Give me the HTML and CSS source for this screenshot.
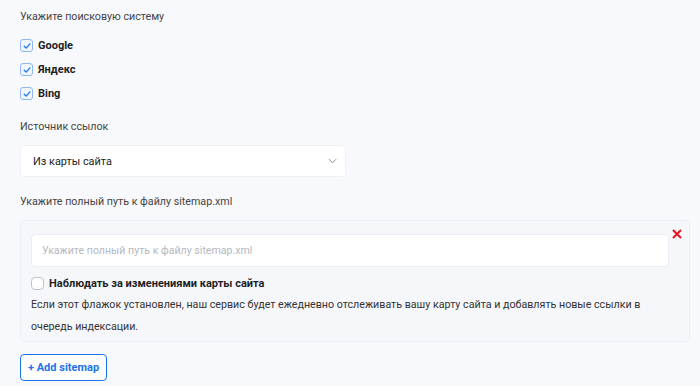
FILE: index.html
```html
<!DOCTYPE html>
<html lang="ru">
<head>
<meta charset="utf-8">
<link rel="stylesheet" href="styles.css">
</head>
<body>
<div class="page">
  <div class="label">Укажите поисковую систему</div>
  <div class="checks">
    <label class="check"><span class="box checked"><svg viewBox="0 0 12 12" width="12" height="12"><path d="M3.2 6.2 L5.2 8.1 L8.9 3.9" fill="none" stroke="#1a73e8" stroke-width="1.3" stroke-linecap="round" stroke-linejoin="round"/></svg></span><span class="check-text">Google</span></label>
    <label class="check"><span class="box checked"><svg viewBox="0 0 12 12" width="12" height="12"><path d="M3.2 6.2 L5.2 8.1 L8.9 3.9" fill="none" stroke="#1a73e8" stroke-width="1.3" stroke-linecap="round" stroke-linejoin="round"/></svg></span><span class="check-text">Яндекс</span></label>
    <label class="check"><span class="box checked"><svg viewBox="0 0 12 12" width="12" height="12"><path d="M3.2 6.2 L5.2 8.1 L8.9 3.9" fill="none" stroke="#1a73e8" stroke-width="1.3" stroke-linecap="round" stroke-linejoin="round"/></svg></span><span class="check-text">Bing</span></label>
  </div>
  <div class="label source">Источник ссылок</div>
  <div class="select">
    <span>Из карты сайта</span>
    <svg class="chev" viewBox="0 0 10 6" width="9" height="6"><path d="M1 1 L5 5 L9 1" fill="none" stroke="#888" stroke-width="1.1"/></svg>
  </div>
  <div class="label path">Укажите полный путь к файлу sitemap.xml</div>
  <div class="card">
    <div class="card-row">
      <div class="input">Укажите полный путь к файлу sitemap.xml</div>
      <svg class="close" viewBox="0 0 10 10" width="10" height="10"><path d="M1 1 L9 9 M9 1 L1 9" stroke="#e8141c" stroke-width="2"/></svg>
    </div>
    <label class="check watch"><span class="box"></span><span class="check-text">Наблюдать за изменениями карты сайта</span></label>
    <p class="desc">Если этот флажок установлен, наш сервис будет ежедневно отслеживать вашу карту сайта и добавлять новые ссылки в очередь индексации.</p>
  </div>
  <button class="add">+ Add sitemap</button>
</div>
</body>
</html>
```
FILE: styles.css
```css
* { box-sizing: border-box; }
html, body { margin: 0; padding: 0; }
body {
  background: #f8f9fc;
  font-family: Roboto, "Noto Sans", sans-serif;
  font-size: 10.7px;
  color: #333;
}
.page {
  padding: 8px 20px 0 20px;
  width: 700px;
}
.label {
  color: #444;
  font-size: 10.7px;
  line-height: 17px;
}
.checks {
  display: flex;
  flex-direction: column;
  gap: 7px;
  margin-top: 12px;
}
.check {
  display: flex;
  align-items: center;
  gap: 5px;
  height: 17px;
}
.box {
  width: 13px;
  height: 13px;
  border: 1px solid #c9cdd6;
  border-radius: 3px;
  background: #fff;
  display: flex;
  align-items: center;
  justify-content: center;
  flex: none;
}
.box.checked {
  border-color: #8fb8f2;
  background: #f2f7ff;
}
.box svg { display: block; margin: -1px; }
.check-text {
  font-weight: 700;
  color: #1f1f1f;
  font-size: 11px;
}
.source { margin-top: 16px; }
.select {
  margin-top: 10px;
  width: 326px;
  height: 32px;
  background: #fff;
  border: 1px solid #eff1f5;
  border-radius: 4px;
  display: flex;
  align-items: center;
  justify-content: space-between;
  padding: 0 8px 0 12px;
  color: #222;
  font-size: 10.9px;
}
.chev { display: block; }
.path { margin-top: 16px; }
.card {
  margin-top: 10px;
  width: 670px;
  background: #f6f7fb;
  border: 1px solid #eceef3;
  border-radius: 5px;
  padding: 13px 20px 3px 10px;
  position: relative;
}
.card-row {
  display: flex;
  align-items: flex-start;
}
.input {
  flex: 1;
  height: 33px;
  background: #fff;
  border: 1px solid #eceef3;
  border-radius: 4px;
  padding: 0 10px;
  display: flex;
  align-items: center;
  color: #b4b8c0;
  font-size: 10.6px;
}
.close {
  position: absolute;
  right: 7px;
  top: 8px;
}
.watch { margin-top: 8px; }
.watch .box { border-color: #bfc3cb; border-radius: 4px; }
.desc {
  margin: 2px 0 0 0;
  line-height: 22px;
  color: #333;
  font-size: 10.7px;
}
.add {
  margin-top: 12px;
  height: 27px;
  padding: 0 7px;
  background: #fff;
  border: 1.5px solid #1a73e8;
  border-radius: 4px;
  color: #1a73e8;
  font-family: Roboto, "Noto Sans", sans-serif;
  font-weight: 700;
  font-size: 11px;
  cursor: pointer;
}
```
